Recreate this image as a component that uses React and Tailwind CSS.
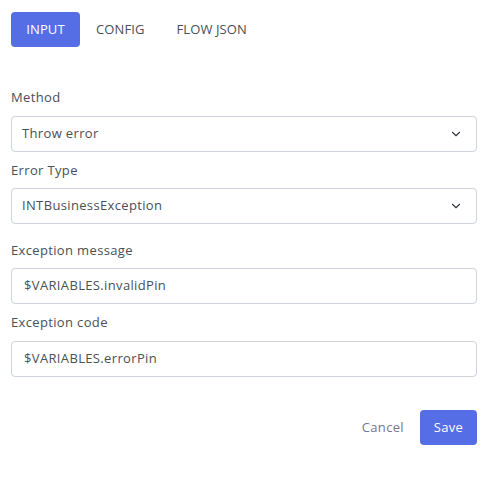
import React from 'react';

const Chevron = () => (
    <svg width="14" height="14" viewBox="0 0 24 24" fill="none" stroke="#343a40" strokeWidth="2" strokeLinecap="round" strokeLinejoin="round">
        <path d="M6 9l6 6 6-6" />
    </svg>
);

const Label = ({ children, className = '' }) => (
    <div className={`h-5 leading-5 text-[13px] font-medium text-[#495057] ${className}`}>{children}</div>
);

const SelectBox = ({ value }) => (
    <div className="h-9 border border-[#ced4da] rounded flex items-center justify-between pl-[10px] pr-[13px] text-[13px] text-[#495057]">
        <span>{value}</span>
        <Chevron />
    </div>
);

const InputBox = ({ value }) => (
    <div className="h-9 border border-[#ced4da] rounded flex items-center px-3 text-[13px] text-[#495057]">
        {value}
    </div>
);

export default function App() {
    return (
        <div className="w-[492px] h-[485px] bg-white pl-[11px] pr-[15px] pt-3 tracking-[0.35px]" style={{ fontFamily: '"Open Sans", sans-serif' }}>
            {/* Tabs */}
            <div className="flex items-center text-[13px] font-medium text-[#495057] tracking-[0.1px]">
                <button className="h-[35px] w-[69px] rounded bg-[#556ee6] text-white">INPUT</button>
                <button className="h-[35px] px-4">CONFIG</button>
                <button className="h-[35px] px-4">FLOW JSON</button>
            </div>

            <div className="mt-10">
                <Label className="mb-[9px]">Method</Label>
                <SelectBox value="Throw error" />
                <Label className="mt-2 mb-2">Error Type</Label>
                <SelectBox value="INTBusinessException" />
                <Label className="mt-4 mb-2">Exception message</Label>
                <InputBox value="$VARIABLES.invalidPin" />
                <Label className="mt-2 mb-[9px]">Exception code</Label>
                <InputBox value="$VARIABLES.errorPin" />
            </div>

            <div className="flex justify-end items-center gap-4 mt-[33px] text-[13px]">
                <button className="text-[#74788d]">Cancel</button>
                <button className="h-[35px] w-[57px] rounded bg-[#556ee6] text-white">Save</button>
            </div>
        </div>
    );
}
